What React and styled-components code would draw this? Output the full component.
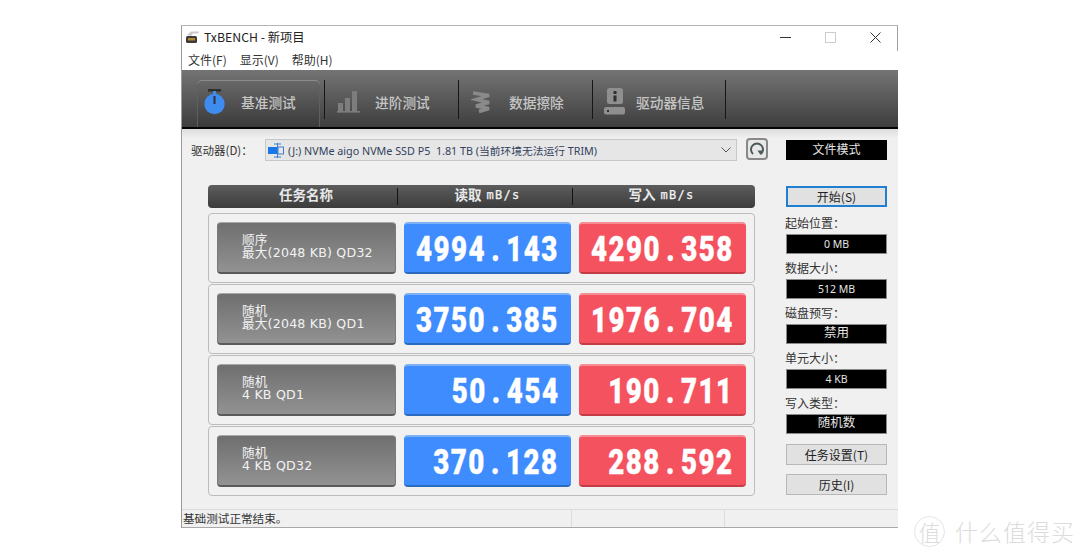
import React from "react";
import styled, { createGlobalStyle } from "styled-components";

const UI = `"Noto Sans", "Noto Sans CJK SC", sans-serif`;
const CJK = `"Noto Sans CJK SC", "Noto Sans", sans-serif`;

const Global = createGlobalStyle`
  html, body { margin: 0; padding: 0; background: #fff; }
  body { width: 1080px; height: 554px; overflow: hidden; font-family: ${UI}; position: relative; }
`;

const Page = styled.div`
  padding: 25px 0 0 181px;
`;
const Window = styled.div`
  width: 717px;
  height: 503px;
  box-sizing: border-box;
  border-top: 1px solid #b4b4b4;
  border-left: 1px solid #9a9a9a;
  border-bottom: 1px solid #a8a8a8;
  display: flex;
  flex-direction: column;
  background: #f0f0f0;
  position: relative;
`;
const TitleBar = styled.div`
  height: 24px;
  box-sizing: border-box;
  background: #fff;
  display: flex;
  align-items: center;
  padding: 0 0 2px 3px;
  font-size: 12.3px;
  color: #222;
`;
const TitleText = styled.span`
  margin-left: 3px;
  flex: 1;
  font-family: ${CJK};
`;
const WinControls = styled.div`
  display: flex;
  align-items: center;
  gap: 34px;
  margin-right: 17px;
`;
const EdgeRight = styled.div`
  position: absolute;
  right: 0;
  top: 0;
  width: 1px;
  height: 25px;
  background: #a0a0a0;
`;
const MenuBar = styled.div`
  height: 20px;
  box-sizing: border-box;
  background: #fff;
  display: flex;
  align-items: center;
  padding: 0 0 2px 6px;
  gap: 13px;
  font-size: 12px;
  color: #333;
  font-family: ${CJK};
`;
const Toolbar = styled.div`
  height: 59px;
  box-sizing: border-box;
  display: flex;
  align-items: flex-start;
  padding: 10px 0 0 15px;
  background: linear-gradient(#747474, #3e3e3e);
  border-bottom: 2px solid #050505;
`;
const Tab = styled.div`
  width: ${(p) => p.$w}px;
  height: 47px;
  box-sizing: border-box;
  display: flex;
  align-items: center;
  padding: 0 0 4px ${(p) => p.$pad}px;
  gap: ${(p) => p.$gap}px;
  color: #c6c6c6;
  font-size: 13.7px;
  font-family: ${CJK};
  font-weight: 500;
  border-radius: 5px 5px 0 0;
  margin-right: ${(p) => (p.$active ? 4 : 0)}px;
  ${(p) =>
    p.$active &&
    `background: linear-gradient(#696969, #3a3a3a);
     box-shadow: inset 0 1px 0 #8c8c8c, inset 1px 0 0 #5f5f5f, inset -1px 0 0 #5f5f5f;`}
`;
const TabSep = styled.div`
  width: 1px;
  height: 39px;
  background: #161616;
`;
const Content = styled.div`
  flex: 1;
  display: flex;
  background: linear-gradient(#dcdcdc 0, #f0f0f0 9px);
`;
const LeftCol = styled.div`
  width: 604px;
  padding: 10px 0 0 9px;
  box-sizing: border-box;
`;
const DriveRow = styled.div`
  display: flex;
  align-items: center;
  height: 22px;
`;
const DriveLabel = styled.div`
  width: 74px;
  font-size: 11.5px;
  color: #333;
  font-family: ${CJK};
`;
const Combo = styled.div`
  width: 472px;
  height: 22px;
  box-sizing: border-box;
  border: 1px solid #c4c8cc;
  background: #e6e6e6;
  display: flex;
  align-items: center;
  padding: 0 5px 0 2px;
  gap: 4px;
  font-size: 10.75px;
  color: #33415e;
  font-family: ${UI};
`;
const ComboText = styled.span`
  flex: 1;
  white-space: pre;
`;
const RefreshBtn = styled.div`
  width: 22px;
  height: 22px;
  margin: 0 0 2px 9px;
  box-sizing: border-box;
  border: 2px solid #888;
  border-radius: 4px;
  background: #e8e8e8;
  display: flex;
  align-items: center;
  justify-content: center;
`;
const Table = styled.div`
  margin: 24px 0 0 17px;
  width: 547px;
`;
const Head = styled.div`
  height: 23px;
  border-radius: 4px;
  background: linear-gradient(#5d5d5d, #3b3b3b);
  display: grid;
  grid-template-columns: 190px 175px 182px;
  margin-bottom: 5px;
  color: #e8e8e8;
  font-size: 13.5px;
  font-weight: 700;
  line-height: 1;
  font-family: ${CJK};
`;
const HeadCell = styled.div`
  display: flex;
  align-items: center;
  justify-content: center;
  box-sizing: border-box;
  gap: 5px;
  padding: 0 ${(p) => p.$pr || 0}px 3px ${(p) => p.$pl || 0}px;
  position: relative;
  ${(p) =>
    p.$sep &&
    `&::after { content: ""; position: absolute; right: 0; top: 3px; bottom: 3px; width: 1px; background: #141414; }`}
`;
const Unit = styled.span`
  font-family: "DejaVu Sans Mono", monospace;
  font-weight: 400;
  font-size: 12px;
  letter-spacing: 1.3px;
  color: #f2f2f2;
  -webkit-text-stroke: 0.25px #f2f2f2;
`;
const Row = styled.div`
  height: 70px;
  box-sizing: border-box;
  border: 1px solid #bcbcbc;
  border-radius: 4px;
  background: #f1f1f1;
  margin-bottom: 1px;
  padding: 8px;
  display: grid;
  grid-template-columns: 179px 167px 167px;
  column-gap: 8px;
`;
const NameCell = styled.div`
  height: 52px;
  box-sizing: border-box;
  border-radius: 4px;
  background: linear-gradient(#6f6f6f, #929292);
  border: 1px solid #7a7a7a;
  border-top-color: #a8a8a8;
  border-bottom: 2px solid #5a5a5a;
  color: #f2f2f2;
  padding: 10px 0 0 24px;
  line-height: 13.3px;
  font-family: "DejaVu Sans", ${CJK};
`;
const NameLine = styled.div`
  white-space: pre;
  font-size: 12.6px;
  letter-spacing: 0.2px;
`;
const ValueCell = styled.div`
  height: 52px;
  box-sizing: border-box;
  border-radius: 4px;
  background: ${(p) => p.$bg};
  border-top: 2px solid ${(p) => p.$top};
  border-bottom: 2px solid ${(p) => p.$bottom};
  display: flex;
  align-items: center;
  justify-content: flex-end;
  padding: 2px 12px 0 0;
`;
const ValueText = styled.span`
  display: inline-block;
  transform: scaleX(0.79);
  transform-origin: right center;
  white-space: nowrap;
  color: #fff;
  font-family: Roboto, "Liberation Sans", sans-serif;
  font-weight: 900;
  font-size: 35px;
  letter-spacing: 1.9px;
  line-height: 1;
  -webkit-text-stroke: 0.4px #fff;
`;
const Dot = styled.span`
  margin: 0 6.5px;
`;
const RightCol = styled.div`
  width: 101px;
  padding-top: 11px;
  display: flex;
  flex-direction: column;
  font-family: ${CJK};
`;
const BlackBox = styled.div`
  height: 20px;
  box-sizing: border-box;
  background: #000;
  border: 1px solid #8a8a8a;
  color: #e4e4e4;
  font-size: ${(p) => (p.$cjk ? 12.5 : 10.5)}px;
  line-height: 1;
  padding-bottom: ${(p) => (p.$cjk ? 2 : 0)}px;
  display: flex;
  align-items: center;
  justify-content: center;
  font-family: ${UI};
`;
const FileMode = styled(BlackBox)`
  border: 0;
  font-size: 12px;
  margin-bottom: 26px;
`;
const Button = styled.div`
  height: 21px;
  box-sizing: border-box;
  background: #e1e1e1;
  border: ${(p) => (p.$primary ? "2px solid #1f7fd0" : "1px solid #b8b8b8")};
  display: flex;
  align-items: center;
  justify-content: center;
  font-size: 12px;
  color: #222;
  margin-top: ${(p) => p.$mt || 0}px;
`;
const FieldLabel = styled.div`
  font-size: 12px;
  color: #333;
  height: 16px;
  line-height: 16px;
  margin: ${(p) => p.$mt}px 0 3px -1px;
`;
const StatusBar = styled.div`
  height: 18px;
  box-sizing: border-box;
  border-top: 1px solid #dcdcdc;
  display: grid;
  grid-template-columns: 390px 153px 1fr;
  font-size: 11.6px;
  color: #333;
  font-family: ${CJK};
  background: #f0f0f0;
`;
const StatusCell = styled.div`
  padding-left: 1px;
  line-height: 17px;
  border-right: 1px solid #dcdcdc;
`;
const Watermark = styled.div`
  position: absolute;
  left: 914px;
  top: 514px;
  display: flex;
  align-items: center;
  gap: 10px;
  color: #dcdcdc;
  font-family: ${CJK};
  font-weight: 300;
`;
const Seal = styled.div`
  width: 29px;
  height: 29px;
  border: 1px solid #e4e4e4;
  border-radius: 50%;
  display: flex;
  align-items: center;
  justify-content: center;
  font-size: 22px;
`;
const Brand = styled.div`
  font-size: 23px;
  letter-spacing: 1px;
`;

const AppIcon = () => (
  <svg width="16" height="14" viewBox="0 0 16 14">
    <path d="M2 5 L6 1.5 H14 L13 3.5 H8 L6 6 Z" fill="#c9c9c9" />
    <rect x="1" y="6" width="11" height="7" rx="1.5" fill="#3b3b3b" />
    <rect x="3" y="8" width="7" height="2.5" fill="#b58a2e" />
  </svg>
);
const Stopwatch = () => (
  <svg width="23" height="26" viewBox="0 0 23 26">
    <rect x="5" y="0" width="13" height="2.6" fill="#2e2e2e" />
    <rect x="10" y="2" width="3" height="3" fill="#3f8cf0" />
    <circle cx="11.5" cy="15" r="10.2" fill="#3f8cf0" />
    <rect x="10.4" y="7" width="2.2" height="8" fill="#2f3a48" />
  </svg>
);
const BarsIcon = () => (
  <svg width="23" height="23" viewBox="0 0 23 23">
    <g fill="#7d7d7d">
      <rect x="1" y="13" width="5" height="8" />
      <rect x="8" y="8" width="5" height="13" />
      <rect x="15" y="1" width="5" height="20" />
      <rect x="0" y="21" width="23" height="1.6" />
    </g>
  </svg>
);
const EraseIcon = () => (
  <svg width="21" height="24" viewBox="0 0 21 24">
    <path
      d="M2 3 L18 5.5 L5 9.5 L18 12.5 L5 16 L18 18.5 L8 21.5"
      fill="none"
      stroke="#8a8a8a"
      strokeWidth="3.4"
    />
  </svg>
);
const DriveIcon = () => (
  <svg width="22" height="27" viewBox="0 0 22 27">
    <rect x="3" y="0" width="16" height="16" rx="2.5" fill="#8f8f8f" />
    <rect x="9.5" y="3" width="3" height="3" fill="#2f2f2f" />
    <rect x="9.5" y="7.5" width="3" height="6" fill="#2f2f2f" />
    <rect x="0" y="19" width="21" height="7.5" rx="2" fill="#8f8f8f" />
    <rect x="3" y="22" width="2" height="2" fill="#2f2f2f" />
  </svg>
);
const NvmeIcon = () => (
  <svg width="16" height="15" viewBox="0 0 16 15">
    <rect x="0" y="4" width="9" height="7" fill="#1976e6" />
    <rect x="10" y="4" width="5.5" height="7" fill="none" stroke="#3a7fd0" />
    <path d="M9.5 0 V15 M6 1 H13 M6 14 H13" stroke="#3a7fd0" fill="none" />
  </svg>
);
const Chevron = () => (
  <svg width="10" height="6" viewBox="0 0 10 6">
    <path d="M0.5 0.5 L5 5 L9.5 0.5" fill="none" stroke="#555" />
  </svg>
);
const RefreshIcon = () => (
  <svg width="16" height="16" viewBox="0 0 16 16">
    <path d="M4 13 A6 6 0 1 1 12 13" fill="none" stroke="#4c5a5c" strokeWidth="2" />
    <path d="M8.5 9.5 H14 L11.5 14 Z" fill="#4c5a5c" />
  </svg>
);
const MinIcon = () => (
  <svg width="11" height="11" viewBox="0 0 11 11">
    <path d="M0 5.5 H11" stroke="#333" />
  </svg>
);
const MaxIcon = () => (
  <svg width="11" height="11" viewBox="0 0 11 11">
    <rect x="0.5" y="0.5" width="10" height="10" fill="none" stroke="#ccc" />
  </svg>
);
const CloseIcon = () => (
  <svg width="11" height="11" viewBox="0 0 11 11">
    <path d="M0.5 0.5 L10.5 10.5 M10.5 0.5 L0.5 10.5" stroke="#333" />
  </svg>
);

const BLUE = { $bg: "#3f8cff", $top: "#7eb0f5", $bottom: "#2b6bbf" };
const RED = { $bg: "#f4525f", $top: "#f58b93", $bottom: "#c43a45" };

const rows = [
  ["顺序", "最大(2048 KB) QD32", "4994.143", "4290.358"],
  ["随机", "最大(2048 KB) QD1", "3750.385", "1976.704"],
  ["随机", "4 KB QD1", "50.454", "190.711"],
  ["随机", "4 KB QD32", "370.128", "288.592"],
];
const fields = [
  ["起始位置：", "0 MB", 8, false],
  ["数据大小：", "512 MB", 6, false],
  ["磁盘预写：", "禁用", 6, true],
  ["单元大小：", "4 KB", 6, false],
  ["写入类型：", "随机数", 6, true],
];

const Value = ({ v }) => {
  const [a, b] = v.split(".");
  return (
    <ValueText>
      {a}
      <Dot>.</Dot>
      {b}
    </ValueText>
  );
};

export default function App() {
  return (
    <>
      <Global />
      <Page>
        <Window>
          <EdgeRight />
          <TitleBar>
            <AppIcon />
            <TitleText>TxBENCH - 新项目</TitleText>
            <WinControls>
              <MinIcon />
              <MaxIcon />
              <CloseIcon />
            </WinControls>
          </TitleBar>
          <MenuBar>
            <span>文件(F)</span>
            <span>显示(V)</span>
            <span>帮助(H)</span>
          </MenuBar>
          <Toolbar>
            <Tab $w={123} $pad={6} $gap={15} $active>
              <Stopwatch />
              基准测试
            </Tab>
            <TabSep />
            <Tab $w={133} $pad={12} $gap={15}>
              <BarsIcon />
              进阶测试
            </Tab>
            <TabSep />
            <Tab $w={133} $pad={12} $gap={17}>
              <EraseIcon />
              数据擦除
            </Tab>
            <TabSep />
            <Tab $w={132} $pad={11} $gap={10}>
              <DriveIcon />
              驱动器信息
            </Tab>
            <TabSep />
          </Toolbar>
          <Content>
            <LeftCol>
              <DriveRow>
                <DriveLabel>驱动器(D)：</DriveLabel>
                <Combo>
                  <NvmeIcon />
                  <ComboText>(J:) NVMe aigo NVMe SSD P5  1.81 TB (当前环境无法运行 TRIM)</ComboText>
                  <Chevron />
                </Combo>
                <RefreshBtn>
                  <RefreshIcon />
                </RefreshBtn>
              </DriveRow>
              <Table>
                <Head>
                  <HeadCell $sep $pl={6}>任务名称</HeadCell>
                  <HeadCell $sep $pl={4}>读取 <Unit>mB/s</Unit></HeadCell>
                  <HeadCell $pr={5}>写入 <Unit>mB/s</Unit></HeadCell>
                </Head>
                {rows.map(([a, b, r, w], i) => (
                  <Row key={i}>
                    <NameCell>
                      <NameLine>{a}</NameLine>
                      <NameLine>{b}</NameLine>
                    </NameCell>
                    <ValueCell {...BLUE}><Value v={r} /></ValueCell>
                    <ValueCell {...RED}><Value v={w} /></ValueCell>
                  </Row>
                ))}
              </Table>
            </LeftCol>
            <RightCol>
              <FileMode>文件模式</FileMode>
              <Button $primary>开始(S)</Button>
              {fields.map(([l, v, mt, cjk]) => (
                <React.Fragment key={l}>
                  <FieldLabel $mt={mt}>{l}</FieldLabel>
                  <BlackBox $cjk={cjk}>{v}</BlackBox>
                </React.Fragment>
              ))}
              <Button $mt={10}>任务设置(T)</Button>
              <Button $mt={9}>历史(I)</Button>
            </RightCol>
          </Content>
          <StatusBar>
            <StatusCell>基础测试正常结束。</StatusCell>
            <StatusCell />
            <div />
          </StatusBar>
        </Window>
      </Page>
      <Watermark>
        <Seal>值</Seal>
        <Brand>什么值得买</Brand>
      </Watermark>
    </>
  );
}
